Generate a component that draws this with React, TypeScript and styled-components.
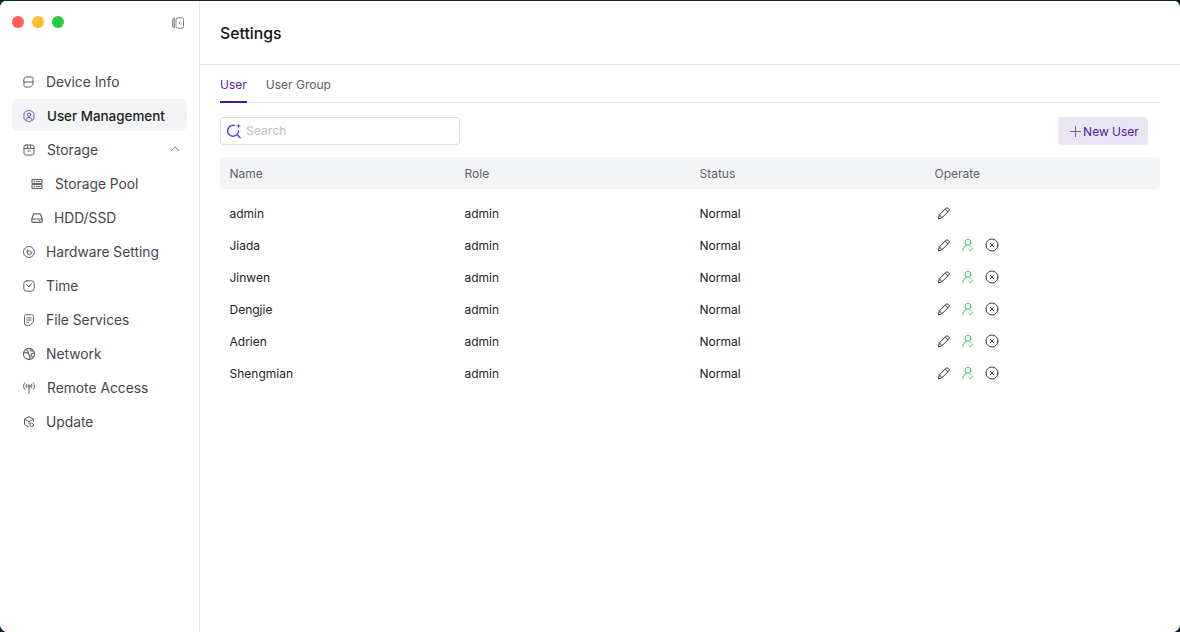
import React from "react";
import styled, { createGlobalStyle } from "styled-components";

const GlobalStyle = createGlobalStyle`
  html, body {
    margin: 0;
    padding: 0;
    height: 100%;
    background: #06262c;
    font-family: Inter, "Noto Sans", sans-serif;
  }
  #root { height: 100%; }
`;

const IconBase = ({ size = 14, color = "#606167", sw = 1, children }: { size?: number; color?: string; sw?: number; children: React.ReactNode }) => (
  <svg width={size} height={size} viewBox="0 0 14 14" fill="none" stroke={color} strokeWidth={sw} strokeLinecap="round" strokeLinejoin="round">
    {children}
  </svg>
);

const DeviceIcon = () => (
  <IconBase>
    <path d="M2 3.500A1.500 1.500 0 0 1 3.500 2h6A1.500 1.500 0 0 1 11 3.500V7H2z" />
    <path d="M2 7v3.500A1.500 1.500 0 0 0 3.500 12h5l2.500-2.500V7" />
  </IconBase>
);
const UserHexIcon = () => (
  <IconBase color="#7a4fc4">
    <path d="M6.200 1.400a1.700 1.700 0 0 1 1.600 0l3.400 1.900c.5.300.8.800.8 1.400v4.600c0 .6-.3 1.100-.8 1.400l-3.400 1.900a1.700 1.700 0 0 1-1.600 0L2.800 10.700c-.5-.3-.8-.8-.8-1.400V4.700c0-.6.3-1.100.8-1.400z" />
    <circle cx="7" cy="5.700" r="1.800" />
    <path d="M3.900 10.800c.5-1.600 1.700-2.400 3.100-2.400s2.600.8 3.100 2.400" />
  </IconBase>
);
const BoxIcon = () => (
  <IconBase>
    <rect x="2" y="2" width="10" height="10" rx="1.800" />
    <path d="M2 5.500h10M5.500 2v3.500M8.500 2v3.500M5.800 8h2.400" />
  </IconBase>
);
const PoolIcon = () => (
  <IconBase sw={1.200}>
    <rect x="2" y="2.500" width="10" height="4" rx=".8" />
    <rect x="2" y="7.500" width="10" height="4" rx=".8" />
    <path d="M4 4.500h.5M4 9.500h.5M6.500 4.500H10M6.500 9.500H10" />
  </IconBase>
);
const DiskIcon = () => (
  <IconBase sw={1.200}>
    <path d="M1.800 8l1.500-4.300a1.200 1.200 0 0 1 1.100-.8h5.200a1.200 1.200 0 0 1 1.100.8L12.200 8v2.300a1 1 0 0 1-1 1H2.800a1 1 0 0 1-1-1z" />
    <path d="M1.800 8h10.400M9.300 9.700h.6" />
  </IconBase>
);
const GaugeIcon = () => (
  <IconBase>
    <circle cx="7" cy="7" r="5.500" />
    <circle cx="7.300" cy="7.700" r="2" />
    <path d="M5.300 7.700V4.700" />
  </IconBase>
);
const ClockIcon = () => (
  <IconBase>
    <rect x="1.800" y="1.800" width="10.400" height="10.400" rx="2.800" />
    <path d="M4.800 5.800l2.100 2.200 2.400-3.200" />
  </IconBase>
);
const FileIcon = () => (
  <IconBase>
    <path d="M2.500 3.500A1.800 1.800 0 0 1 4.300 1.700h5.400a1.800 1.800 0 0 1 1.800 1.800v5.300l-3.500 3.500H4.300a1.800 1.800 0 0 1-1.800-1.800z" />
    <path d="M4.800 4.800h4.400M4.800 7h4.400M4.800 9.300h1.800" />
  </IconBase>
);
const GlobeIcon = () => (
  <IconBase sw={1.100}>
    <circle cx="7" cy="7" r="5.600" />
    <path d="M1.800 5.500c2 1 2.700-.5 4.200.5s.5 2 1.500 3 .5 2.500-.5 3.500M4 2.300c1 1 3 1.700 2.500 3.200M8.500 1.700c-1 1.800.5 2.800 2.200 2.300M12.500 6.500c-1.500-.5-3.500 0-3.500 1.500s1.500 1.500 2 2.500" />
  </IconBase>
);
const AntennaIcon = () => (
  <IconBase>
    <circle cx="7" cy="5" r="1.100" />
    <path d="M7 6.100v6.400M4.800 3c-1 1.200-1 2.800 0 4M9.200 3c1 1.200 1 2.800 0 4M2.900 1.700c-1.800 2-1.800 4.800 0 6.800M11.100 1.700c1.800 2 1.800 4.800 0 6.800" />
  </IconBase>
);
const CubeIcon = () => (
  <IconBase>
    <path d="M7 1.800l4.500 2.400v2.300M7 1.800L2.500 4.200v5.300L6.500 12M2.500 4.200L7 6.600l4.500-2.400M7 6.600v2" />
    <circle cx="9.700" cy="9.800" r="1.800" />
  </IconBase>
);
const ChevronUp = () => (
  <IconBase size={12}>
    <path d="M2.500 9L7 4.500 11.500 9" />
  </IconBase>
);
const CollapseIcon = () => (
  <IconBase size={14} color="#85868c">
    <rect x="5" y="1.800" width="7.500" height="10.400" rx="1.500" />
    <path d="M3.300 2.200c-1 .2-1.800.7-1.800 1.800v6c0 1.100.8 1.600 1.800 1.800V2.200z" fill="#c9cacd" />
    <path d="M9.300 5.500L8 7l1.300 1.500" />
  </IconBase>
);
const SearchSparkIcon = () => (
  <IconBase size={16} color="#5b4be8" sw={1.300}>
    <path d="M11 6.700a4.800 4.800 0 1 1-3.800-4.600" />
    <path d="M9.700 10l2.700 2.900" />
    <path d="M11 1.300v2.400M9.800 2.500h2.400" stroke="#7a4fc4" strokeWidth="1" />
  </IconBase>
);
const PlusIcon = () => (
  <IconBase size={13} color="#7a5ab8" sw={1.100}>
    <path d="M7 1.500v11M1.500 7h11" />
  </IconBase>
);
const PencilIcon = () => (
  <IconBase size={14} color="#3a3b40">
    <path d="M1.500 12.500l.9-3.600 6.800-6.800a1.200 1.200 0 0 1 1.700 0l1 1a1.200 1.200 0 0 1 0 1.700l-6.800 6.800z" />
    <path d="M8.200 3.100l2.700 2.700M2.400 8.900l2.700 2.700" />
  </IconBase>
);
const UserCheckIcon = () => (
  <IconBase size={14} color="#3fc463">
    <circle cx="7" cy="4.200" r="2.900" />
    <path d="M1.800 12.500c.2-2.500 1.700-4.300 3.700-5M9 8c.5.200 1 .5 1.400.9" />
    <path d="M8 11.500l1.500 1.300 2.500-2.600" />
  </IconBase>
);
const RemoveIcon = () => (
  <IconBase size={14} color="#3a3b40">
    <circle cx="7" cy="7" r="6" />
    <path d="M5.200 5.200l3.600 3.600M8.800 5.200l-3.600 3.600" />
  </IconBase>
);

const Window = styled.div`
  height: 632px;
  width: 1180px;
  display: flex;
  background: #fff;
  border-radius: 8px;
  overflow: hidden;
  padding-top: 1px;
  box-sizing: border-box;
  background-clip: content-box;
`;

const Sidebar = styled.aside`
  width: 200px;
  flex-shrink: 0;
  box-sizing: border-box;
  border-right: 1px solid #e6e6ea;
  padding: 0 12px;
  background: #fff;
`;

const TitleBar = styled.div`
  height: 64px;
  display: flex;
  align-items: flex-start;
  justify-content: space-between;
  padding: 15px 2px 0 0;
  box-sizing: border-box;
`;

const Lights = styled.div`
  display: flex;
  gap: 8px;
`;

const Light = styled.span<{ $color: string }>`
  width: 12px;
  height: 12px;
  border-radius: 50%;
  background: ${(p) => p.$color};
`;

const Nav = styled.nav`
  display: flex;
  flex-direction: column;
`;

const NavItem = styled.div<{ $active?: boolean; $sub?: boolean; $gap?: number }>`
  height: 34px;
  display: flex;
  align-items: center;
  gap: ${(p) => p.$gap ?? 10}px;
  padding-left: ${(p) => (p.$sub ? "18px" : "10px")};
  padding-right: 6px;
  font-size: ${(p) => (p.$active ? "13.400px" : "13.800px")};
  line-height: 34px;
  color: ${(p) => (p.$active ? "#1d1e22" : "#45464c")};
  font-weight: ${(p) => (p.$active ? 500 : 400)};
  position: relative;
  z-index: 0;
  ${(p) =>
    p.$active &&
    `
    &::before {
      content: "";
      position: absolute;
      z-index: -1;
      left: 0;
      right: 0;
      top: 0;
      bottom: 2px;
      background: #f3f4f6;
      border-radius: 6px;
    }
  `}
`;

const Trailing = styled.span`
  margin-left: auto;
  display: flex;
  margin-top: -3px;
`;

const Main = styled.main`
  flex: 1;
  min-width: 0;
  background: #fff;
`;

const PageHeader = styled.header`
  height: 64px;
  box-sizing: border-box;
  border-bottom: 1px solid #e6e6ea;
  padding: 1px 20px 0;
  display: flex;
  align-items: center;
  font-size: 15.800px;
  font-weight: 500;
  color: #111216;
`;

const Content = styled.div`
  padding: 0 20px;
`;

const Tabs = styled.div`
  height: 37px;
  display: flex;
  gap: 19px;
  border-bottom: 1px solid #e3e3ea;
`;

const Tab = styled.div<{ $active?: boolean }>`
  height: 38px;
  box-sizing: border-box;
  padding-top: 3px;
  display: flex;
  align-items: center;
  font-size: 12px;
  color: ${(p) => (p.$active ? "#5b21a8" : "#5c5d63")};
  border-bottom: 2px solid ${(p) => (p.$active ? "#4a149c" : "transparent")};
`;

const Toolbar = styled.div`
  display: flex;
  align-items: center;
  justify-content: space-between;
  padding: 14px 12px 12px 0;
`;

const SearchBox = styled.div`
  width: 240px;
  height: 28px;
  box-sizing: border-box;
  border: 1px solid #dcdce6;
  border-radius: 4px;
  display: flex;
  align-items: center;
  gap: 4px;
  padding: 0 0 1px 5px;
  font-size: 12px;
  font-weight: 500;
  color: #c3c5d0;
`;

const NewUserButton = styled.div`
  width: 90px;
  height: 28px;
  box-sizing: border-box;
  padding-left: 2px;
  border-radius: 4px;
  background: #ebe4f5;
  color: #4a1e9c;
  font-size: 12px;
  display: flex;
  align-items: center;
  justify-content: center;
  gap: 1px;
`;

const Columns = styled.div`
  display: grid;
  grid-template-columns: repeat(4, 235px);
  padding-left: 9.500px;
  align-items: center;
`;

const TableHead = styled(Columns)`
  height: 32px;
  background: #f3f4f6;
  border-radius: 4px;
  font-size: 12px;
  color: #606167;
  margin-bottom: 8px;
`;

const Row = styled(Columns)`
  height: 32px;
  font-size: 12px;
  color: #1f2024;
`;

const Operate = styled.div`
  display: flex;
  align-items: center;
  gap: 10px;
  padding-left: 2.500px;
`;

const users = ["admin", "Jiada", "Jinwen", "Dengjie", "Adrien", "Shengmian"];

export default function App() {
  return (
    <>
      <GlobalStyle />
      <Window>
        <Sidebar>
          <TitleBar>
            <Lights>
              <Light $color="#ff5f57" />
              <Light $color="#febc2e" />
              <Light $color="#28c840" />
            </Lights>
            <CollapseIcon />
          </TitleBar>
          <Nav>
            <NavItem><DeviceIcon />Device Info</NavItem>
            <NavItem $active $gap={11}><UserHexIcon />User Management</NavItem>
            <NavItem $gap={11}><BoxIcon />Storage<Trailing><ChevronUp /></Trailing></NavItem>
            <NavItem $sub $gap={11}><PoolIcon />Storage Pool</NavItem>
            <NavItem $sub><DiskIcon />HDD/SSD</NavItem>
            <NavItem><GaugeIcon />Hardware Setting</NavItem>
            <NavItem><ClockIcon />Time</NavItem>
            <NavItem><FileIcon />File Services</NavItem>
            <NavItem><GlobeIcon />Network</NavItem>
            <NavItem $gap={11}><AntennaIcon />Remote Access</NavItem>
            <NavItem><CubeIcon />Update</NavItem>
          </Nav>
        </Sidebar>
        <Main>
          <PageHeader>Settings</PageHeader>
          <Content>
            <Tabs>
              <Tab $active>User</Tab>
              <Tab>User Group</Tab>
            </Tabs>
            <Toolbar>
              <SearchBox><SearchSparkIcon />Search</SearchBox>
              <NewUserButton><PlusIcon />New User</NewUserButton>
            </Toolbar>
            <TableHead>
              <div>Name</div>
              <div>Role</div>
              <div>Status</div>
              <div>Operate</div>
            </TableHead>
            {users.map((name, i) => (
              <Row key={name}>
                <div>{name}</div>
                <div>admin</div>
                <div>Normal</div>
                <Operate>
                  <PencilIcon />
                  {i > 0 && <UserCheckIcon />}
                  {i > 0 && <RemoveIcon />}
                </Operate>
              </Row>
            ))}
          </Content>
        </Main>
      </Window>
    </>
  );
}
